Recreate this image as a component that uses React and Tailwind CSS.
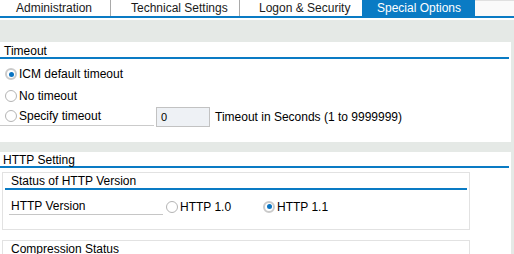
import React from "react";

const BLUE = "bg-[#0a7bc4]";

function Radio({ checked }) {
  return checked ? (
    <span className="flex h-3 w-3 shrink-0 items-center justify-center rounded-full border-2 border-[#cacaca] bg-white">
      <span className="h-[5px] w-[5px] rounded-full bg-[#0a74c2]" />
    </span>
  ) : (
    <span className="h-3 w-3 shrink-0 rounded-full border border-[#b4b4b4] bg-white" />
  );
}

function RadioRow({ checked, label }) {
  return (
    <div className="flex h-[22px] items-center gap-[2px] pl-[5px]">
      <Radio checked={checked} />
      <span>{label}</span>
    </div>
  );
}

function SectionHeader({ title, className }) {
  return (
    <>
      <div className={`${className} flex items-center text-black`}>{title}</div>
      <div className={`h-[2px] mr-[2px] ${BLUE}`} />
    </>
  );
}

export default function App() {
  return (
    <div className="h-[254px] w-[514px] overflow-hidden bg-[#e5e9e6] font-['Liberation_Sans',Arial,sans-serif] text-[12px] text-black">
      {/* tab strip */}
      <div className="flex h-4 bg-white leading-[17px] text-[#1a1a1a]">
        <div className="w-[111px] border-r border-[#a9a9a9] pl-4">Administration</div>
        <div className="w-[129px] border-r border-[#a9a9a9] pl-5">Technical Settings</div>
        <div className="w-[122px] pl-[19px]">Logon &amp; Security</div>
        <div className={`w-[113px] pl-[15px] text-white ${BLUE}`}>Special Options</div>
        <div className="flex-1 border-t border-[#e0e0e0] bg-[#fafafa]" />
      </div>
      <div className={`h-[2px] ${BLUE}`} />
      <div className="h-[2px] bg-white" />
      <div className="h-[22px]" />

      {/* Timeout */}
      <div className="mr-[3px] h-[100px] bg-white">
        <SectionHeader title="Timeout" className="h-[15px] pl-1 pt-[3px]" />
        <div className="h-[3px]" />
        <div className="pt-px">
          <RadioRow checked label="ICM default timeout" />
          <RadioRow label="No timeout" />
        </div>
        <div className="-mt-px flex h-[22px] items-start">
          <div className="mt-px flex h-[19px] w-[154px] items-center gap-[2px] border-b border-[#cbcbcb] pl-[5px]">
            <Radio />
            <span>Specify timeout</span>
          </div>
          <div className="ml-[2px] mt-px flex h-5 w-[54px] items-center border border-[#c2c2c2] bg-[#eef1f5] pl-1 text-[11px]">
            0
          </div>
          <div className="ml-[5px] flex h-[22px] items-center">Timeout in Seconds (1 to 9999999)</div>
        </div>
      </div>

      <div className="h-[10px]" />

      {/* HTTP Setting */}
      <div className="mr-[3px] h-[102px] bg-white">
        <SectionHeader title="HTTP Setting" className="h-[14px] pl-[3px] pt-px" />

        <div className="ml-[2px] mt-1 h-[58px] w-[468px] border border-[#e2e2e2]">
          <div className="flex h-[15px] items-center pl-2 pt-px">Status of HTTP Version</div>
          <div className={`mx-[2px] h-[2px] ${BLUE}`} />
          <div className="flex items-start">
            <div className="ml-[6px] mt-2 flex h-[17px] w-[154px] items-center border-b border-[#c6c6c6] pl-[2px]">
              HTTP Version
            </div>
            <div className="ml-[3px] mt-2 flex h-[17px] w-[97px] items-center gap-[2px]">
              <Radio />
              <span>HTTP 1.0</span>
            </div>
            <div className="mt-2 flex h-[17px] items-center gap-[2px]">
              <Radio checked />
              <span>HTTP 1.1</span>
            </div>
          </div>
        </div>

        <div className="ml-[2px] mt-[10px] h-[30px] w-[468px] border border-[#e2e2e2]">
          <div className="flex h-[14px] items-center pl-2 pt-px">Compression Status</div>
        </div>
      </div>
    </div>
  );
}
